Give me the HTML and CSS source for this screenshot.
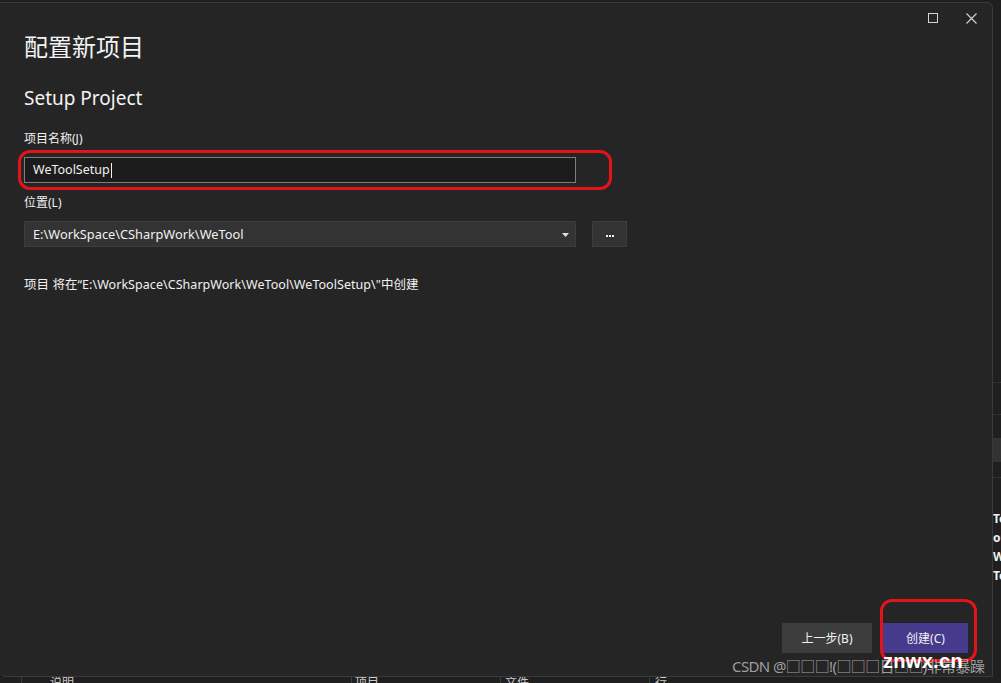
FILE: index.html
```html
<!DOCTYPE html>
<html lang="zh-CN">
<head>
<meta charset="utf-8">
<title>配置新项目</title>
<link rel="stylesheet" href="styles.css">
</head>
<body>
<div class="desktop">
  <div class="dialog">
    <div class="titlebar">
      <span class="ctl">
        <svg width="10" height="10" viewBox="0 0 10 10"><rect x="0.5" y="0.5" width="9" height="9" fill="none" stroke="#d4d4d4" stroke-width="1"/></svg>
      </span>
      <span class="ctl">
        <svg width="11" height="11" viewBox="0 0 11 11"><path d="M0.5 0.5 L10.5 10.5 M10.5 0.5 L0.5 10.5" stroke="#d4d4d4" stroke-width="1.1" fill="none"/></svg>
      </span>
    </div>
    <div class="content">
      <h1 class="title">配置新项目</h1>
      <h2 class="subtitle">Setup Project</h2>
      <div class="label first">项目名称(J)</div>
      <div class="field-wrap">
        <div class="input">WeToolSetup<span class="caret"></span></div>
        <div class="ring ring-input"></div>
      </div>
      <div class="label">位置(L)</div>
      <div class="loc-row">
        <div class="select">
          <span>E:\WorkSpace\CSharpWork\WeTool</span>
          <svg width="7" height="4" viewBox="0 0 7 4"><path d="M0 0 H7 L3.5 4 Z" fill="#e0e0e0"/></svg>
        </div>
        <div class="browse"><i></i><i></i><i></i></div>
      </div>
      <p class="note">项目 将在“E:\WorkSpace\CSharpWork\WeTool\WeToolSetup\"中创建</p>
    </div>
    <div class="footer">
      <button class="btn">上一步(B)</button>
      <div class="create-wrap">
        <button class="btn primary">创建(C)</button>
        <div class="ring ring-create"></div>
      </div>
    </div>
    <div class="watermark"><span class="csdn">CSDN @□□□!(□□□日□□)非常暴躁</span><span class="znwx">znwx.cn</span></div>
  </div>
  <div class="side">
    <div class="side-line"></div>
    <div class="side-line"></div>
    <div class="side-band"></div>
    <div class="side-line"></div>
    <div class="side-text">To</div>
    <div class="side-text">ou</div>
    <div class="side-text">Wo</div>
    <div class="side-text">To</div>
  </div>
  <div class="bottom">
    <span class="col c1">说明</span>
    <span class="col c2">项目</span>
    <span class="col c3">文件</span>
    <span class="col c4">行</span>
  </div>
</div>
</body>
</html>
```
FILE: styles.css
```css
* { box-sizing: border-box; }
html, body { margin: 0; padding: 0; }
body {
  width: 1001px;
  height: 683px;
  overflow: hidden;
  background: #1f1f1f;
  font-family: "Noto Sans", "Noto Sans CJK SC", sans-serif;
  color: #f1f1f1;
}
.desktop {
  display: grid;
  grid-template-columns: 993px 8px;
  grid-template-rows: 677px 6px;
  width: 1001px;
  height: 683px;
}
.dialog {
  position: relative;
  grid-column: 1;
  grid-row: 1;
  margin-top: 2px;
  background: #252525;
  border: 1px solid #3a3a3a;
  border-left: none;
  border-bottom-left-radius: 6px;
  border-top-right-radius: 6px;
  display: flex;
  flex-direction: column;
}
.titlebar {
  height: 28px;
  display: flex;
  justify-content: flex-end;
  align-items: center;
  gap: 28px;
  padding: 2px 15px 0 0;
}
.ctl { display: flex; width: 11px; height: 11px; align-items: center; justify-content: center; }
.content {
  padding-left: 24px;
  display: flex;
  flex-direction: column;
}
.title {
  margin: 0;
  font-size: 24px;
  font-weight: 400;
  line-height: 32px;
  color: #f3f3f3;
}
.subtitle {
  margin: 22px 0 0;
  font-size: 19px;
  font-weight: 400;
  line-height: 26px;
  color: #f3f3f3;
}
.label {
  margin-top: 12px;
  font-size: 12px;
  line-height: 16px;
  color: #f1f1f1;
}
.label.first { margin-top: 20px; }
.field-wrap {
  position: relative;
  margin-top: 10px;
  width: 552px;
}
.input {
  height: 26px;
  background: #1c1c1c;
  border: 1px solid #7d7d7d;
  padding-left: 8px;
  font-size: 12.5px;
  line-height: 24px;
  color: #f1f1f1;
  display: flex;
  align-items: center;
}
.caret {
  display: inline-block;
  width: 1px;
  height: 15px;
  background: #f1f1f1;
  margin-left: 1px;
}
.ring {
  position: absolute;
  border: 3px solid #e0141a;
  border-radius: 12px;
  pointer-events: none;
}
.ring-input { left: -6px; top: -7px; width: 594px; height: 40px; }
.loc-row {
  margin-top: 10px;
  display: flex;
  gap: 16px;
}
.select {
  width: 552px;
  height: 26px;
  background: #333333;
  border: 1px solid #3d3d3d;
  padding: 0 6px 0 8px;
  display: flex;
  align-items: center;
  justify-content: space-between;
  font-size: 12.8px;
  color: #f1f1f1;
}
.select svg { margin-top: 1px; }
.browse {
  width: 35px;
  height: 26px;
  background: #333333;
  border: 1px solid #3d3d3d;
  display: flex;
  align-items: center;
  justify-content: center;
  gap: 1px;
  padding-top: 4px;
}
.browse i { display: block; width: 2px; height: 2px; background: #f0f0f0; }
.note {
  margin: 30px 0 0;
  font-size: 12.5px;
  letter-spacing: 0.05px;
  line-height: 16px;
  color: #f1f1f1;
}
.footer {
  margin-top: auto;
  display: flex;
  justify-content: flex-end;
  gap: 11px;
  padding: 0 24px 23px 0;
}
.btn {
  height: 30px;
  border: none;
  font-family: inherit;
  font-size: 12px;
  color: #f1f1f1;
  background: #3d3d3d;
  width: 90px;
  padding: 0;
}
.btn.primary { background: #463a8d; width: 85px; display: block; }
.create-wrap { position: relative; }
.ring-create { left: -3px; top: -24px; width: 97px; height: 63px; }
.watermark {
  position: absolute;
  left: 732px;
  top: 650px;
  display: flex;
  align-items: center;
  height: 24px;
  pointer-events: none;
}
.csdn {
  font-size: 15px;
  color: rgba(200, 200, 200, 0.75);
  white-space: nowrap;
  letter-spacing: -0.6px;
}
.znwx {
  position: absolute;
  left: 151px;
  top: -3px;
  font-size: 20px;
  font-weight: 700;
  color: #ffffff;
  font-family: "Liberation Sans", sans-serif;
  letter-spacing: 0.3px;
}
.side {
  grid-column: 2;
  grid-row: 1 / span 2;
  background: #1f1f1f;
  overflow: hidden;
  display: flex;
  flex-direction: column;
  padding-top: 382px;
}
.side-line { height: 1px; background: #333; margin-bottom: 31px; }
.side-band { height: 24px; background: #333; margin: -8px 0 15px; }
.side-text {
  font-size: 12px;
  font-weight: 700;
  line-height: 19px;
  color: #f1f1f1;
  white-space: nowrap;
}
.bottom {
  grid-column: 1;
  grid-row: 2;
  position: relative;
  overflow: hidden;
  background: #1f1f1f;
  display: flex;
}
.col {
  position: absolute;
  top: 0;
  font-size: 12px;
  line-height: 12px;
  color: #c8c8c8;
  border-left: 1px solid #3c3c3c;
  height: 6px;
}
.c1 { left: 21px; padding-left: 28px; }
.c2 { left: 351px; padding-left: 3px; }
.c3 { left: 500px; padding-left: 4px; }
.c4 { left: 649px; padding-left: 5px; }
```
